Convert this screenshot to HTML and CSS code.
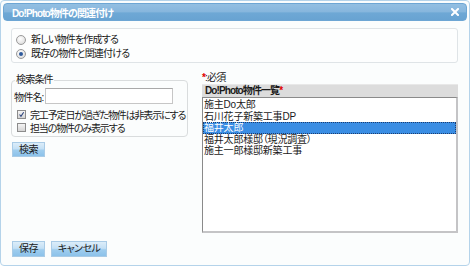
FILE: index.html
```html
<!DOCTYPE html>
<html lang="ja">
<head>
<meta charset="utf-8">
<title>Do!Photo物件の関連付け</title>
<link rel="stylesheet" href="styles.css">
</head>
<body>
<div class="dialog">
  <div class="titlebar">
    <span class="title">Do!Photo物件の関連付け</span>
    <span class="close"><svg width="8" height="8" viewBox="0 0 8 8"><path d="M1 1L7 7M7 1L1 7" stroke="#fff" stroke-width="2" stroke-linecap="square"/></svg></span>
  </div>
  <div class="content">
    <div class="radiobox">
      <div class="radio-row"><span class="radio"></span>新しい物件を作成する</div>
      <div class="radio-row"><span class="radio checked"></span>既存の物件と関連付ける</div>
    </div>
    <div class="main">
      <div class="left">
        <fieldset class="search">
          <legend>検索条件</legend>
          <div class="field"><span class="label">物件名:</span><span class="input"></span></div>
          <div class="check-row"><span class="checkbox"><svg width="9" height="9" viewBox="0 0 9 9"><path d="M2 4.5L3.8 6.8L7.3 1.5" fill="none" stroke="#27407a" stroke-width="1.3"/></svg></span>完工予定日が過ぎた物件は非表示にする</div>
          <div class="check-row"><span class="checkbox"></span>担当の物件のみ表示する</div>
        </fieldset>
        <button class="btn btn-search">検索</button>
      </div>
      <div class="right">
        <div class="req"><span class="star">*</span>:必須</div>
        <div class="listhead">Do!Photo物件一覧<span class="star">*</span></div>
        <div class="list">
          <div class="item">施主Do太郎</div>
          <div class="item">石川花子新築工事DP</div>
          <div class="item selected">福井太郎</div>
          <div class="item">福井太郎様邸（現況調査）</div>
          <div class="item">施主一郎様邸新築工事</div>
        </div>
      </div>
    </div>
    <div class="footer">
      <button class="btn btn-save">保存</button>
      <button class="btn btn-cancel">キャンセル</button>
    </div>
  </div>
</div>
</body>
</html>
```
FILE: styles.css
```css
* { box-sizing: border-box; }
html, body { margin: 0; padding: 0; background: #ffffff; }
body {
  font-family: "Liberation Sans", "Noto Sans CJK JP", sans-serif;
  font-size: 10px;
  letter-spacing: -0.8px;
  color: #1a1a1a;
  font-feature-settings: "palt";
}
.dialog {
  width: 470px;
  height: 266px;
  border: 1px solid #b4d3ea;
  border-radius: 4px;
  padding: 2px;
  background: #fbfdfd;
  display: flex;
  flex-direction: column;
}
.titlebar {
  height: 18px;
  border: 1px solid #6da6d4;
  border-radius: 4px;
  background: linear-gradient(#93bfe2 0%, #86b6dd 50%, #6ea8d5 55%, #68a3d2 100%);
  display: flex;
  align-items: center;
  justify-content: space-between;
  padding: 0 7px 0 8px;
}
.title {
  color: #ffffff;
  font-weight: bold;
  font-size: 10px;
  letter-spacing: -0.9px;
}
.close { display: flex; align-items: center; }
.content {
  flex: 1;
  padding: 7px 9px 0 8px;
  display: flex;
  flex-direction: column;
}
.radiobox {
  height: 35px;
  border: 1px solid #dfe4e7;
  border-radius: 3px;
  background: #fdfefe;
  padding: 4px 0 0 4px;
}
.radio-row {
  height: 14px;
  display: flex;
  align-items: center;
  line-height: 14px;
  white-space: nowrap;
}
.radio {
  width: 10px;
  height: 10px;
  border-radius: 50%;
  border: 1px solid #9a9a9a;
  background: radial-gradient(circle at 40% 35%, #ffffff 0%, #e6e6e6 60%, #cfcfcf 100%);
  margin-right: 5px;
  display: flex;
  align-items: center;
  justify-content: center;
  flex: none;
}
.radio.checked::after {
  content: "";
  width: 4px;
  height: 4px;
  border-radius: 50%;
  background: #2e5a9c;
}
.main {
  display: flex;
  gap: 14px;
  margin-top: 9px;
}
.left {
  width: 177px;
  padding-top: 3px;
}
.search {
  margin: 0;
  padding: 0 2px 2px 2px;
  border: 1px solid #d9dcdd;
  border-radius: 4px;
  min-width: 0;
}
.search legend {
  padding: 0 1px;
  margin-left: 1px;
  line-height: 10px;
  height: 10px;
}
.field {
  display: flex;
  align-items: center;
  margin-top: 3px;
  height: 16px;
}
.label { width: 31px; white-space: nowrap; }
.input {
  width: 128px;
  height: 16px;
  border: 1px solid #c6c6c6;
  border-top-color: #a9a9a9;
  background: #ffffff;
}
.check-row {
  height: 13px;
  display: flex;
  align-items: center;
  padding-left: 3px;
  white-space: nowrap;
  letter-spacing: -1.15px;
}
.field + .check-row { margin-top: 4px; }
.checkbox {
  width: 9px;
  height: 9px;
  border: 1px solid #8c8c8c;
  background: linear-gradient(#f4f4f4, #d4d4d4);
  margin-right: 4px;
  display: flex;
  align-items: center;
  justify-content: center;
  flex: none;
}
.checkbox svg { display: block; }
.btn {
  font-family: inherit;
  font-size: 10px;
  letter-spacing: -0.6px;
  font-feature-settings: "palt";
  color: #1a1a1a;
  height: 16px;
  padding: 0;
  border: 1px solid #a9cbe6;
  background: linear-gradient(#dcedf9 0%, #c4e0f5 45%, #9fcdee 55%, #8cc2ea 100%);
  line-height: 14px;
}
.btn-search { width: 33px; height: 15px; margin: 5px 0 0 1px; display: block; }
.right {
  width: 256px;
  display: flex;
  flex-direction: column;
}
.req { height: 12px; line-height: 11px; }
.star { color: #e00000; font-weight: bold; }
.listhead {
  height: 13px;
  background: #dcdcdc;
  border-top: 1px solid #e8e8e8;
  font-weight: bold;
  line-height: 12px;
  padding-left: 3px;
  letter-spacing: -0.9px;
}
.list {
  height: 136px;
  background: #ffffff;
  border-left: 1px solid #8a8a8a;
  border-top: 1px solid #8a8a8a;
  border-right: 2px solid #c4c4c6;
  border-bottom: 2px solid #c4c4c6;
  padding-top: 1px;
  font-size: 10px;
  letter-spacing: -0.2px;
}
.item {
  height: 11.5px;
  line-height: 11.5px;
  padding-left: 1px;
  white-space: nowrap;
}
.item.selected {
  background: #3a8de3;
  color: #ffffff;
  outline: 1px dotted #1c3d70;
  outline-offset: -1px;
}
.footer {
  display: flex;
  gap: 6px;
  margin-top: 8px;
  padding-left: 1px;
}
.btn-save { width: 33px; }
.btn-cancel { width: 56px; }
```
